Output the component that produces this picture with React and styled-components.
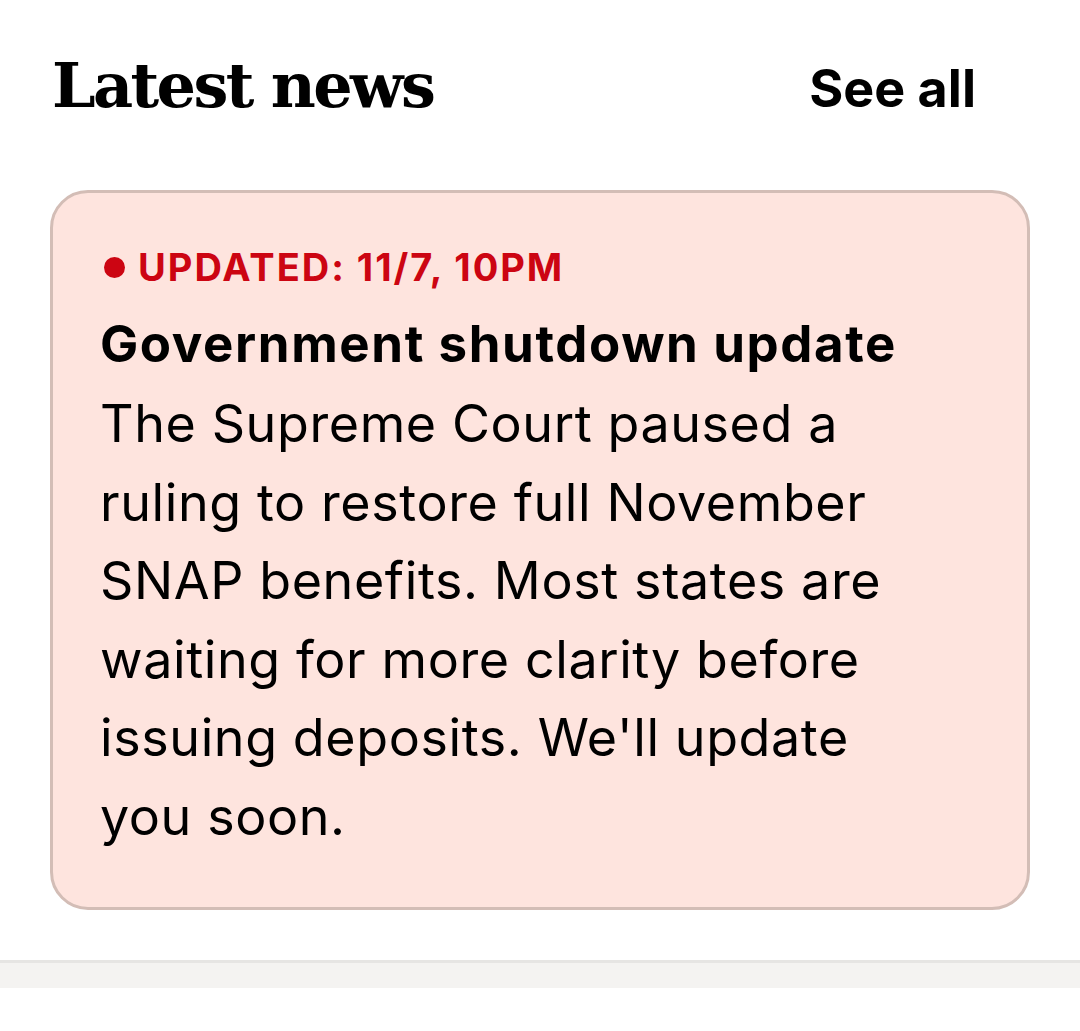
import React from 'react';
import styled, { createGlobalStyle } from 'styled-components';

const GlobalStyle = createGlobalStyle`
  body {
    margin: 0;
    background: #ffffff;
    font-family: Inter, "Noto Sans", sans-serif;
    color: #000000;
  }
`;

const Section = styled.section`
  display: flex;
  flex-direction: column;
  padding-top: 50px;
`;

const Header = styled.div`
  display: flex;
  align-items: baseline;
  justify-content: space-between;
  padding: 0 104px 0 52px;
`;

const Title = styled.h2`
  margin: 0;
  font-family: "DejaVu Serif", serif;
  font-weight: 700;
  font-size: 62px;
  letter-spacing: -2.6px;
  line-height: 72px;
`;

const SeeAll = styled.a`
  font-weight: 700;
  font-size: 52px;
  color: #000000;
  text-decoration: none;
`;

const Card = styled.article`
  margin: 68px 50px 0;
  padding: 50px 49px 51px 47px;
  background: #fee4de;
  border: 3px solid #d3bdb6;
  border-radius: 38px;
`;

const Stamp = styled.div`
  display: flex;
  align-items: center;
  gap: 13px;
  font-weight: 700;
  font-size: 38px;
  letter-spacing: 2px;
  line-height: 48px;
  color: #cc0512;
`;

const Dot = styled.span`
  width: 21px;
  height: 21px;
  margin-left: 4px;
  border-radius: 50%;
  background: #cc0512;
`;

const Headline = styled.h3`
  margin: 22px 0 0;
  font-weight: 700;
  font-size: 51px;
  letter-spacing: 1.6px;
  line-height: 62px;
`;

const Body = styled.p`
  margin: 10px 0 0;
  max-width: 806px;
  font-size: 52px;
  letter-spacing: 0.6px;
  line-height: 78.5px;
`;

const Footer = styled.div`
  margin-top: 50px;
  height: 25px;
  border-top: 3px solid #e6e5e3;
  background: #f4f3f1;
`;

export default function App() {
  return (
    <>
      <GlobalStyle />
      <Section>
        <Header>
          <Title>Latest news</Title>
          <SeeAll href="#">See all</SeeAll>
        </Header>
        <Card>
          <Stamp>
            <Dot />
            UPDATED: 11/7, 10PM
          </Stamp>
          <Headline>Government shutdown update</Headline>
          <Body>
            The Supreme Court paused a ruling to restore full November SNAP benefits. Most
            states are waiting for more clarity before issuing deposits. We'll update you soon.
          </Body>
        </Card>
        <Footer />
      </Section>
    </>
  );
}
